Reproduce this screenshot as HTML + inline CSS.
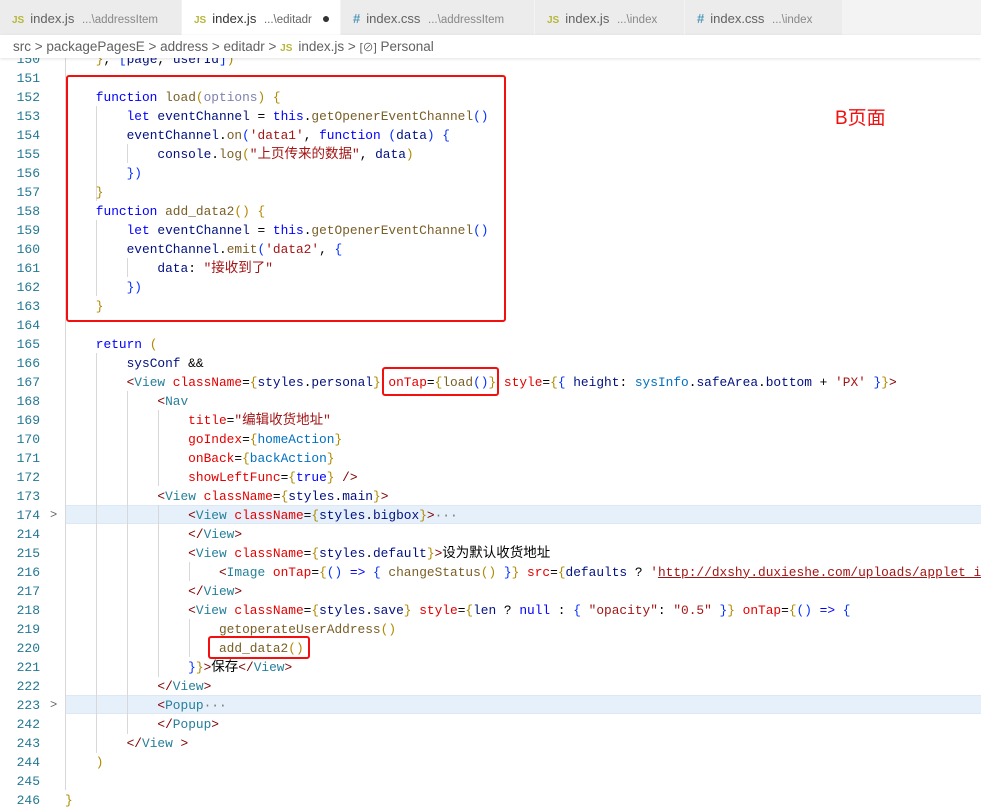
<!DOCTYPE html>
<html><head><meta charset="utf-8"><style>
*{margin:0;padding:0;box-sizing:border-box}
body{width:981px;height:811px;overflow:hidden;background:#fff;position:relative;font-family:"Liberation Sans","Noto Sans CJK SC",sans-serif}
.tabs{position:absolute;left:0;top:0;width:981px;height:35px;background:#f3f3f3}
.tab{position:absolute;top:0;height:35px;background:#ececec;font-size:13px;color:#616161;line-height:37px;padding-left:12px;white-space:nowrap;border-right:1px solid #f3f3f3}
.tab.act{background:#fff;color:#333}
.tab .d{font-size:11.5px;color:#888;margin-left:4px}
.tab.act .d{color:#666}
.js{font-weight:bold;font-size:10px;margin-right:6px;color:#b7b73b}
.hash{color:#519aba;font-weight:bold;margin-right:6px}
.bc{position:absolute;left:0;top:35px;width:981px;height:23px;background:#fff;font-size:13.5px;color:#616161;line-height:24px;padding-left:13px;z-index:5;box-shadow:0 1px 3px rgba(0,0,0,.12);white-space:nowrap}
.code{position:absolute;left:0;top:0;width:981px;height:811px;font-family:"Liberation Mono","Noto Sans CJK SC",monospace;font-size:12.84px}
.ln{position:absolute;left:0;width:40px;text-align:right;color:#237893;height:19px;line-height:19px;font-size:13px}
.l{position:absolute;left:65px;height:19px;line-height:19px;white-space:pre;color:#000}
.hl{position:absolute;left:65px;width:916px;height:19px;background:#e6f0fa;border-top:1px solid #dde8f3;border-bottom:1px solid #dde8f3}
.g{position:absolute;width:1px;background:#d8d8d8}
.fold{position:absolute;left:50px;color:#666;font-size:12px;height:19px;line-height:19px}
.k{color:#0000ff}.f{color:#795e26}.v{color:#001080}.s{color:#a31515}.t{color:#267f99}.a{color:#e50000}.b{color:#b08a00}.p{color:#0431fa}.gr{color:#800000}.u{color:#a31515;text-decoration:underline}
.cj{font-family:"Noto Sans CJK SC",sans-serif;font-size:13.5px;line-height:0}
.box{position:absolute;border:2.5px solid #f40f0f;border-radius:3px;z-index:6}
</style></head><body>
<div class="tabs">
<div class="tab" style="left:0;width:182px"><span class="js">JS</span>index.js <span class="d">...\addressItem</span></div>
<div class="tab act" style="left:182px;width:159px"><span class="js">JS</span>index.js <span class="d">...\editadr</span><span style="margin-left:10px;font-size:14px;color:#333">●</span></div>
<div class="tab" style="left:341px;width:194px"><span class="hash">#</span>index.css <span class="d">...\addressItem</span></div>
<div class="tab" style="left:535px;width:150px"><span class="js">JS</span>index.js <span class="d">...\index</span></div>
<div class="tab" style="left:685px;width:158px"><span class="hash">#</span>index.css <span class="d">...\index</span></div>
</div>
<div class="bc">src &gt; packagePagesE &gt; address &gt; editadr &gt; <span class="js">JS</span>index.js &gt; <span style="color:#555;font-size:11px">[⊘]</span> Personal</div>
<div class="code">
<div class="hl" style="top:505px"></div>
<div class="hl" style="top:695px"></div>
<div class="g" style="left:65px;top:58px;height:732px"></div>
<div class="g" style="left:96px;top:106px;height:95px"></div>
<div class="g" style="left:96px;top:220px;height:76px"></div>
<div class="g" style="left:127px;top:144px;height:19px"></div>
<div class="g" style="left:127px;top:258px;height:19px"></div>
<div class="g" style="left:96px;top:353px;height:400px"></div>
<div class="g" style="left:127px;top:391px;height:343px"></div>
<div class="g" style="left:158px;top:410px;height:76px"></div>
<div class="g" style="left:158px;top:505px;height:172px"></div>
<div class="g" style="left:189px;top:562px;height:19px"></div>
<div class="g" style="left:189px;top:619px;height:38px"></div>
<div id="L"></div>
</div>
<div class="box" style="left:66px;top:75px;width:440px;height:247px"></div>
<div class="box" style="left:382px;top:367px;width:117px;height:29px"></div>
<div class="box" style="left:208px;top:636px;width:102px;height:23px"></div>
<div style="position:absolute;left:835px;top:103px;color:#f01010;font-size:19px;font-family:'Liberation Sans','Noto Sans CJK SC',sans-serif">B页面</div>
<script>
var lines=[
[150,'    <span class="b">}</span>, <span class="p">[</span><span class="v">page</span>, <span class="v">userId</span><span class="p">]</span><span class="b">)</span>'],
[151,''],
[152,'    <span class="k">function</span> <span class="f">load</span><span class="b">(</span><span class="v" style="color:#8080b0">options</span><span class="b">)</span> <span class="b">{</span>'],
[153,'        <span class="k">let</span> <span class="v">eventChannel</span> = <span class="k">this</span>.<span class="f">getOpenerEventChannel</span><span class="p">()</span>'],
[154,'        <span class="v">eventChannel</span>.<span class="f">on</span><span class="p">(</span><span class="s">\'data1\'</span>, <span class="k">function</span> <span class="p">(</span><span class="v">data</span><span class="p">)</span> <span class="p">{</span>'],
[155,'            <span class="v">console</span>.<span class="f">log</span><span class="b">(</span><span class="s">"<span class="cj">上页传来的数据</span>"</span>, <span class="v">data</span><span class="b">)</span>'],
[156,'        <span class="p">})</span>'],
[157,'    <span class="b">}</span>'],
[158,'    <span class="k">function</span> <span class="f">add_data2</span><span class="b">()</span> <span class="b">{</span>'],
[159,'        <span class="k">let</span> <span class="v">eventChannel</span> = <span class="k">this</span>.<span class="f">getOpenerEventChannel</span><span class="p">()</span>'],
[160,'        <span class="v">eventChannel</span>.<span class="f">emit</span><span class="p">(</span><span class="s">\'data2\'</span>, <span class="p">{</span>'],
[161,'            <span class="v">data</span>: <span class="s">"<span class="cj">接收到了</span>"</span>'],
[162,'        <span class="p">})</span>'],
[163,'    <span class="b">}</span>'],
[164,''],
[165,'    <span class="k">return</span> <span class="b">(</span>'],
[166,'        <span class="v">sysConf</span> &amp;&amp;'],
[167,'        <span class="gr">&lt;</span><span class="t">View</span> <span class="a">className</span>=<span class="b">{</span><span class="v">styles</span>.<span class="v">personal</span><span class="b">}</span> <span class="a">onTap</span>=<span class="b">{</span><span class="f">load</span><span class="p">()</span><span class="b">}</span> <span class="a">style</span>=<span class="b">{</span><span class="p">{</span> <span class="v">height</span>: <span class="v" style="color:#0070c1">sysInfo</span>.<span class="v">safeArea</span>.<span class="v">bottom</span> + <span class="s">\'PX\'</span> <span class="p">}</span><span class="b">}</span><span class="gr">&gt;</span>'],
[168,'            <span class="gr">&lt;</span><span class="t">Nav</span>'],
[169,'                <span class="a">title</span>=<span class="s">"<span class="cj">编辑收货地址</span>"</span>'],
[170,'                <span class="a">goIndex</span>=<span class="b">{</span><span class="v" style="color:#0070c1">homeAction</span><span class="b">}</span>'],
[171,'                <span class="a">onBack</span>=<span class="b">{</span><span class="v" style="color:#0070c1">backAction</span><span class="b">}</span>'],
[172,'                <span class="a">showLeftFunc</span>=<span class="b">{</span><span class="k">true</span><span class="b">}</span> <span class="gr">/&gt;</span>'],
[173,'            <span class="gr">&lt;</span><span class="t">View</span> <span class="a">className</span>=<span class="b">{</span><span class="v">styles</span>.<span class="v">main</span><span class="b">}</span><span class="gr">&gt;</span>'],
[174,'                <span class="gr">&lt;</span><span class="t">View</span> <span class="a">className</span>=<span class="b">{</span><span class="v">styles</span>.<span class="v">bigbox</span><span class="b">}</span><span class="gr">&gt;</span><span style="color:#777">···</span>'],
[214,'                <span class="gr">&lt;/</span><span class="t">View</span><span class="gr">&gt;</span>'],
[215,'                <span class="gr">&lt;</span><span class="t">View</span> <span class="a">className</span>=<span class="b">{</span><span class="v">styles</span>.<span class="v">default</span><span class="b">}</span><span class="gr">&gt;</span><span class="cj">设为默认收货地址</span>'],
[216,'                    <span class="gr">&lt;</span><span class="t">Image</span> <span class="a">onTap</span>=<span class="b">{</span><span class="p">()</span> <span class="k">=&gt;</span> <span class="p">{</span> <span class="f">changeStatus</span><span class="b">()</span> <span class="p">}</span><span class="b">}</span> <span class="a">src</span>=<span class="b">{</span><span class="v">defaults</span> ? <span class="s">\'</span><span class="u">http://dxshy.duxieshe.com/uploads/applet_img/</span>'],
[217,'                <span class="gr">&lt;/</span><span class="t">View</span><span class="gr">&gt;</span>'],
[218,'                <span class="gr">&lt;</span><span class="t">View</span> <span class="a">className</span>=<span class="b">{</span><span class="v">styles</span>.<span class="v">save</span><span class="b">}</span> <span class="a">style</span>=<span class="b">{</span><span class="v">len</span> ? <span class="k">null</span> : <span class="p">{</span> <span class="s">"opacity"</span>: <span class="s">"0.5"</span> <span class="p">}</span><span class="b">}</span> <span class="a">onTap</span>=<span class="b">{</span><span class="p">()</span> <span class="k">=&gt;</span> <span class="p">{</span>'],
[219,'                    <span class="f">getoperateUserAddress</span><span class="b">()</span>'],
[220,'                    <span class="f">add_data2</span><span class="b">()</span>'],
[221,'                <span class="p">}</span><span class="b">}</span><span class="gr">&gt;</span><span class="cj">保存</span><span class="gr">&lt;/</span><span class="t">View</span><span class="gr">&gt;</span>'],
[222,'            <span class="gr">&lt;/</span><span class="t">View</span><span class="gr">&gt;</span>'],
[223,'            <span class="gr">&lt;</span><span class="t">Popup</span><span style="color:#777">···</span>'],
[242,'            <span class="gr">&lt;/</span><span class="t">Popup</span><span class="gr">&gt;</span>'],
[243,'        <span class="gr">&lt;/</span><span class="t">View</span> <span class="gr">&gt;</span>'],
[244,'    <span class="b">)</span>'],
[245,''],
[246,'<span class="b">}</span>']
];
var h='';
lines.forEach(function(x,i){var top=49.5+i*19;
h+='<div class="ln" style="top:'+top+'px">'+x[0]+'</div><div class="l" style="top:'+top+'px">'+x[1]+'</div>';
if(x[0]==174||x[0]==223)h+='<div class="fold" style="top:'+top+'px">&gt;</div>';});
document.getElementById('L').innerHTML=h;
</script>
</body></html>
